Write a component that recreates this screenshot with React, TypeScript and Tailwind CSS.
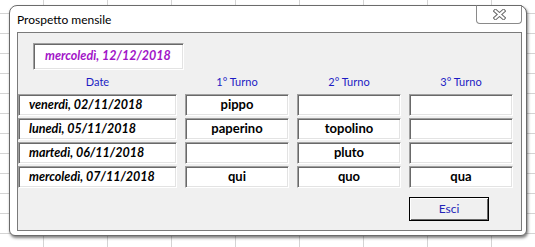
import { Fragment } from "react";

const rows = [
  { date: "venerdì, 02/11/2018", t1: "pippo", t2: "", t3: "" },
  { date: "lunedì, 05/11/2018", t1: "paperino", t2: "topolino", t3: "" },
  { date: "martedì, 06/11/2018", t1: "", t2: "pluto", t3: "" },
  { date: "mercoledì, 07/11/2018", t1: "qui", t2: "quo", t3: "qua" },
];

function Field({ children, italic }: { children?: string; italic?: boolean }) {
  return (
    <div
      className={
        "h-[22px] flex items-center bg-white border border-t-[#a0a0a0] border-l-[#a0a0a0] border-r-white border-b-white shadow-[inset_1px_1px_0_#696969,inset_-1px_-1px_0_#e3e3e3] font-bold text-black " +
        (italic ? "italic justify-start pl-[10px] text-[12.5px]" : "justify-center text-[13px]")
      }
    >
      {children}
    </div>
  );
}

export default function App() {
  return (
    <div className="w-[535px] h-[247px] overflow-hidden bg-white pt-[5px] pl-[9px] font-['Lato','Open_Sans',sans-serif] [background-image:linear-gradient(to_right,#d4d4d4_1px,transparent_1px),linear-gradient(to_bottom,#d4d4d4_1px,transparent_1px)] [background-size:64px_20px] [background-position:43px_13px]">
      {/* dialog window */}
      <div className="w-[518px] h-[231px] flex flex-col bg-white border border-[#6b6b6b] rounded-t-[8px] rounded-b-[6px] shadow-[1px_2px_3px_rgba(0,0,0,0.5)]">
        <div className="h-[26px] flex items-start justify-between">
          <span className="pl-[7px] pt-[6px] text-[12px] text-black leading-[16px]">Prospetto mensile</span>
          <div className="-mt-px mr-[4px] w-[46px] h-[19px] flex items-center justify-center border border-[#8a8a8a] border-t-[#6b6b6b] rounded-b-[4px] bg-white">
            <svg width="13" height="11" viewBox="0 0 13 11">
              <path d="M2.5 2 L10.5 9 M10.5 2 L2.5 9" stroke="#6a6a6a" strokeWidth="4" strokeLinecap="square" />
              <path d="M2.5 2 L10.5 9 M10.5 2 L2.5 9" stroke="#ffffff" strokeWidth="2" strokeLinecap="square" />
            </svg>
          </div>
        </div>

        <div className="flex-1 ml-[7px] mr-[4px] mb-[4px] border border-[#7a7a7a] bg-[#f0f0f0]">
          <div className="ml-[15px] mt-[10px] w-[151px] h-[27px] flex items-center pl-[11px] bg-white border border-t-[#a0a0a0] border-l-[#a0a0a0] border-r-white border-b-white shadow-[inset_1px_1px_0_#696969,inset_-1px_-1px_0_#e3e3e3] text-[12.5px] font-bold italic text-[#a214c8]">
            mercoledì, 12/12/2018
          </div>

          <div className="grid grid-cols-[159px_104px_104px_104px] gap-x-[8px] gap-y-[2px]">
            {["Date", "1° Turno", "2° Turno", "3° Turno"].map((h) => (
              <div key={h} className="h-[20px] mt-[2px] flex items-center justify-center text-[11px] text-[#1c1cc4]">
                {h}
              </div>
            ))}
            {rows.map((r) => (
              <Fragment key={r.date}>
                <Field italic>{r.date}</Field>
                <Field>{r.t1}</Field>
                <Field>{r.t2}</Field>
                <Field>{r.t3}</Field>
              </Fragment>
            ))}
            <div className="col-start-4 mt-[7px]">
              <button className="w-[80px] h-[24px] flex items-center justify-center bg-[#f0f0f0] border border-black shadow-[inset_1px_1px_0_#ffffff,inset_-1px_-1px_0_#696969] text-[12px] text-[#2424b8]">
                Esci
              </button>
            </div>
          </div>
        </div>
      </div>
    </div>
  );
}
